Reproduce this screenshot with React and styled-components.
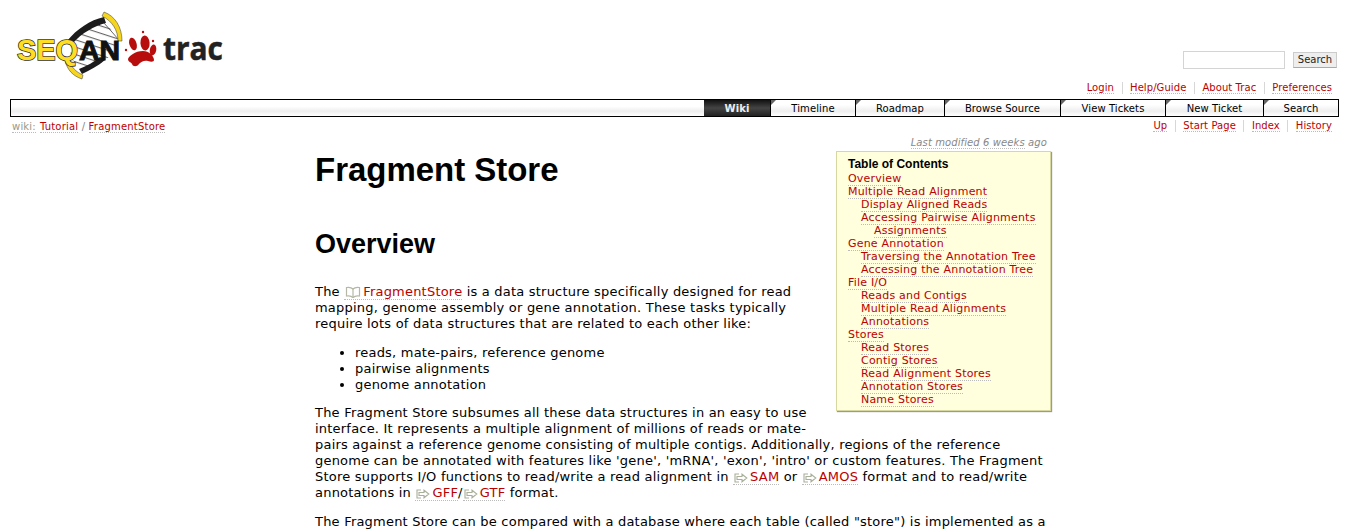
import React from "react";
import styled, { createGlobalStyle } from "styled-components";

const Global = createGlobalStyle`
  html { overflow: hidden; }
  body { margin: 0; background: #fff; color: #000; font: 13px/16px "DejaVu Sans", Verdana, sans-serif; }
`;
const Page = styled.div`height: 529px; overflow: hidden;`;
const Banner = styled.header`display: flex; justify-content: space-between; height: 99px; padding: 0 10px 0 15px; box-sizing: border-box;`;
const LogoBox = styled.div`padding-top: 10px;`;
const HeaderRight = styled.div`display: flex; flex-direction: column; align-items: flex-end;`;
const SearchForm = styled.form`display: flex; align-items: center; gap: 8px; margin: 51px 2px 0 0; height: 18px;`;
const SearchInput = styled.input`width: 100px; height: 16px; padding: 0; border: 1px solid #d4d4d4; background: #fff; box-sizing: content-box;`;
const SearchButton = styled.button`width: 44px; height: 16px; padding: 0; border: 1px solid #ccc; border-bottom-color: #aaa; background: #eee; color: #222; font: 10px/14px "DejaVu Sans", Verdana, sans-serif;`;
const InlineNav = styled.nav`display: flex; font-size: 10px; line-height: 12px; letter-spacing: 0.08px;`;
const MetaNav = styled(InlineNav)`margin: 13px 7px 0 0;`;
const NavItem = styled.span`padding: 0 7.5px; border-left: 1px solid #d7d7d7; &:first-child { border-left: 0; } &:last-child { padding-right: 0; }`;
const RedLink = styled.a`color: #b00; border-bottom: 1px dotted #bbb; text-decoration: none;`;
const MainNav = styled.nav`display: flex; justify-content: flex-end; height: 16px; margin: 0 10px; border: 1px solid #000; background: linear-gradient(#fff 40%, #eee 70%, #fff); font-size: 10px; line-height: 17px; letter-spacing: 0.1px;`;
const Tab = styled.div`
  position: relative; width: ${p => p.$w}px; box-sizing: border-box; text-align: center; color: #000;
  border-left: ${p => (p.$active ? "0" : "1px solid #000")};
  background: ${p => (p.$active ? "linear-gradient(#111, #444 50%, #222)" : "linear-gradient(#fff 30%, #eee 70%, #fff)")};
  ${p => p.$active && "color: #eee; font-weight: bold;"}
  &::before {
    content: ""; display: ${p => (p.$active ? "none" : "block")}; position: absolute; left: 0; top: 0;
    width: 5px; height: 5px; background: #666; clip-path: polygon(0 0, 100% 0, 0 100%);
  }
`;
const CtxBar = styled.div`display: flex; justify-content: space-between; align-items: center; height: 18px; padding: 0 17px 0 12px; font-size: 10px; line-height: 15px;`;
const Crumbs = styled.div`color: #888; letter-spacing: 0.2px;`;
const CrumbLabel = styled.span`color: #998; border-bottom: 1px dotted #bbb; margin-right: 4px;`;
const Wiki = styled.main`margin: 0 302px 0 315px; width: 732px; position: relative; letter-spacing: 0.21px;`;
const LastMod = styled.div`text-align: right; font-size: 10px; line-height: 14px; font-style: italic; color: #888; padding-top: 1px; height: 16px; box-sizing: border-box; letter-spacing: 0.1px;`;
const Dotted = styled.span`border-bottom: 1px dotted #bbb;`;
const Toc = styled.aside`float: right; width: 215px; height: 260px; margin: 0 -4px 20px 8px; box-sizing: border-box; padding: 6px 11px; background: #ffd; border: 1px solid #d7d7a0; box-shadow: 1px 1px 1px #999; font-size: 11px; line-height: 13px; letter-spacing: 0.2px;`;
const TocTitle = styled.div`font: bold 12px/13px "Liberation Sans", Arial, sans-serif; margin-bottom: 1px; letter-spacing: 0;`;
const TocRow = styled.div`padding-left: ${p => p.$level * 13}px; white-space: nowrap;`;
const H1 = styled.h1`font: bold 33px/38px "Liberation Sans", Arial, sans-serif; margin: 0; letter-spacing: -0.03px;`;
const H2 = styled.h2`font: bold 27px/30px "Liberation Sans", Arial, sans-serif; margin: 0; padding-top: 40px; letter-spacing: 0;`;
const P = styled.p`margin: ${p => p.$mt || 13}px 0 0;`;
const List = styled.ul`margin: 13px 0 12px; padding: 0 0 0 40px;`;
const IconLink = styled.a`color: #b00; text-decoration: none; border-bottom: 1px dotted #bbb; white-space: nowrap; svg { vertical-align: -2px; margin: 0 2px 0 1px; }`;

const Book = () => (
  <svg width="16" height="12" viewBox="0 0 16 12" fill="none" stroke="#b4b8a4" strokeWidth="1.2">
    <path d="M8 3C6.5 1.5 4 1 1.5 1.5V10C4 9.5 6.5 10 8 11.5 9.5 10 12 9.5 14.5 10V1.5C12 1 9.5 1.5 8 3Z" />
    <path d="M8 3V11.5" />
  </svg>
);
const ExtArrow = () => (
  <svg width="14" height="10" viewBox="0 0 14 10" fill="none" stroke="#a8b09a" strokeWidth="1.1">
    <path d="M5 1H1V9H5" />
    <path d="M3 3.5H8V1.2L12.8 5 8 8.8V6.5H3Z" />
  </svg>
);

const Logo = () => (
  <svg width="210" height="72" viewBox="15 10 210 72">
    <defs>
      <pattern id="hatch" width="10" height="7" patternUnits="userSpaceOnUse" patternTransform="rotate(18)">
        <rect width="10" height="7" fill="#fff" />
        <rect width="10" height="1.1" fill="#666" />
      </pattern>
    </defs>
    <path d="M72 41C80 32 92 24 105 21L119 41C115 52 108 62 84 71L70 58Z" fill="url(#hatch)" />
    <path d="M67 41C77 29 90 20 104 17L106 23C94 26 82 33 73 43Z" fill="#1c1c1c" />
    <path d="M105 60C98 66 90 70 82 74L79 69C87 66 94 62 100 57Z" fill="#1c1c1c" />
    <path d="M104 23L119 40" stroke="#444" strokeWidth="0.8" fill="none" />
    <path d="M104 12C115 16 122 27 122 41L118 41C118 30 112 21 102 16Z" fill="#f6d51f" stroke="#333" strokeWidth="0.5" />
    <path d="M65 60C67 70 73 76 82 79L83 75C76 72 71 67 69 60Z" fill="#f6d51f" stroke="#333" strokeWidth="0.5" />
    <text x="17" y="60" fontFamily="Liberation Sans" fontWeight="bold" fontSize="30" fill="#ffdd22" stroke="#333" strokeWidth="1.6" paintOrder="stroke" textLength="61" lengthAdjust="spacingAndGlyphs">SEQ</text>
    <text x="79" y="60" fontFamily="Liberation Sans" fontWeight="bold" fontSize="27" fill="#111" stroke="#111" strokeWidth="1" textLength="41" lengthAdjust="spacingAndGlyphs">AN</text>
    <g fill="#b80d0d">
      <path d="M143 51C149 51 154 56 154 60 154 62 151 62 148 61 144 60 141 62 139 64 137 67 133 67 132 64 131 62 128 62 128 59 129 56 135 51 143 51Z" />
      <ellipse cx="133" cy="44" rx="3.6" ry="6.5" transform="rotate(-18 133 44)" />
      <ellipse cx="145" cy="43" rx="4.6" ry="7.5" transform="rotate(-4 145 43)" />
      <ellipse cx="153" cy="50" rx="3.2" ry="5.5" transform="rotate(12 153 50)" />
      <circle cx="126" cy="50" r="1.2" />
      <circle cx="143" cy="32" r="1.2" />
      <circle cx="153" cy="41" r="1.2" />
    </g>
    <text x="163" y="60" fontFamily="Open Sans" fontWeight="bold" fontSize="33" fill="#222" stroke="#222" strokeWidth="0.5" textLength="60" lengthAdjust="spacingAndGlyphs">trac</text>
  </svg>
);

const tabs = [["Wiki", 66, true], ["Timeline", 85], ["Roadmap", 89], ["Browse Source", 116], ["View Tickets", 105], ["New Ticket", 98], ["Search", 75]];
const toc = [
  [0, "Overview"], [0, "Multiple Read Alignment"], [1, "Display Aligned Reads"], [1, "Accessing Pairwise Alignments"], [2, "Assignments"],
  [0, "Gene Annotation"], [1, "Traversing the Annotation Tree"], [1, "Accessing the Annotation Tree"], [0, "File I/O"], [1, "Reads and Contigs"],
  [1, "Multiple Read Alignments"], [1, "Annotations"], [0, "Stores"], [1, "Read Stores"], [1, "Contig Stores"], [1, "Read Alignment Stores"],
  [1, "Annotation Stores"], [1, "Name Stores"],
];

export default function App() {
  return (
    <Page>
      <Global />
      <Banner>
        <LogoBox><Logo /></LogoBox>
        <HeaderRight>
          <SearchForm onSubmit={e => e.preventDefault()}>
            <SearchInput />
            <SearchButton>Search</SearchButton>
          </SearchForm>
          <MetaNav>
            {["Login", "Help/Guide", "About Trac", "Preferences"].map(t => <NavItem key={t}><RedLink>{t}</RedLink></NavItem>)}
          </MetaNav>
        </HeaderRight>
      </Banner>
      <MainNav>
        {tabs.map(([t, w, a]) => <Tab key={t} $w={w} $active={a}>{t}</Tab>)}
      </MainNav>
      <CtxBar>
        <Crumbs><CrumbLabel>wiki:</CrumbLabel><RedLink>Tutorial</RedLink> / <RedLink>FragmentStore</RedLink></Crumbs>
        <InlineNav>
          {["Up", "Start Page", "Index", "History"].map(t => <NavItem key={t}><RedLink>{t}</RedLink></NavItem>)}
        </InlineNav>
      </CtxBar>
      <Wiki>
        <LastMod><Dotted>Last modified</Dotted> <Dotted>6 weeks</Dotted> ago</LastMod>
        <Toc>
          <TocTitle>Table of Contents</TocTitle>
          {toc.map(([l, t]) => <TocRow key={t} $level={l}><RedLink>{t}</RedLink></TocRow>)}
        </Toc>
        <H1>Fragment Store</H1>
        <H2>Overview</H2>
        <P $mt={25}>The <IconLink><Book />FragmentStore</IconLink> is a data structure specifically designed for read mapping, genome assembly or gene annotation. These tasks typically require lots of data structures that are related to each other like:</P>
        <List>
          <li>reads, mate-pairs, reference genome</li>
          <li>pairwise alignments</li>
          <li>genome annotation</li>
        </List>
        <P $mt={12}>The Fragment Store subsumes all these data structures in an easy to use interface. It represents a multiple alignment of millions of reads or mate-pairs against a reference genome consisting of multiple contigs. Additionally, regions of the reference genome can be annotated with features like 'gene', 'mRNA', 'exon', 'intro' or custom features. The Fragment Store supports I/O functions to read/write a read alignment in <IconLink><ExtArrow />SAM</IconLink> or <IconLink><ExtArrow />AMOS</IconLink> format and to read/write annotations in <IconLink><ExtArrow />GFF</IconLink>/<IconLink><ExtArrow />GTF</IconLink> format.</P>
        <P>The Fragment Store can be compared with a database where each table (called "store") is implemented as a</P>
      </Wiki>
    </Page>
  );
}
